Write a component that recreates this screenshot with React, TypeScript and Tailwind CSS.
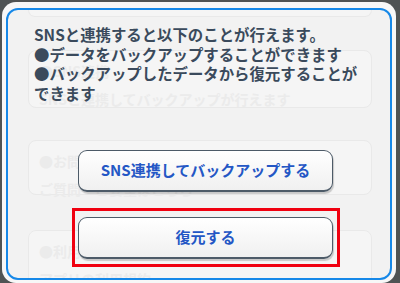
import React from "react";

const jp = { fontFamily: '"Noto Sans CJK JP", "Noto Sans", sans-serif' };

function GhostCard({ h, title, body, mt }: { h: number; title: string; body: string; mt: string }) {
  return (
    <div
      aria-hidden="true"
      className={`${mt} ml-[20px] w-[344px] rounded-[8px] border border-[#e9e9e9] bg-[#f5f5f5] px-[10px] pt-[6px] text-[14px] font-bold leading-[28px] text-[#ebebeb]`}
      style={{ height: h }}
    >
      <div>{title}</div>
      <div>{body}</div>
    </div>
  );
}

export default function App() {
  return (
    <div className="w-[400px] h-[283px] overflow-hidden bg-[#4f5354] pl-[2px] pt-[2px]" style={jp}>
      <div className="w-[394px] h-[281px] rounded-[14px] bg-[#f7f7f7] pl-[4px] pr-[4px] pt-[6px] pb-[3px]">
        <div className="grid h-[272px] w-[386px] overflow-hidden rounded-[12px] border-2 border-[#1688e8] bg-[#f2f2f2]">
          {/* faded content behind */}
          <div className="[grid-area:1/1] flex flex-col">
            <div className="ml-[20px] h-[7px] w-[344px] rounded-b-[8px] border border-t-0 border-[#e9e9e9] bg-[#f5f5f5]" />
            <GhostCard mt="mt-[33px]" h={58} title="●SNS連携" body="SNSと連携してバックアップが行えます" />
            <GhostCard mt="mt-[32px]" h={55} title="●お問い合わせ" body="ご質問・ご要望はこちら" />
            <GhostCard mt="mt-[35px]" h={60} title="●利用規約" body="アプリの利用規約" />
          </div>
          {/* dialog content */}
          <div className="[grid-area:1/1] flex flex-col pt-[15px]">
            <p className="ml-[26px] text-[15.4px] font-bold leading-[19.5px] text-[#3a4a5c]">
              SNSと連携すると以下のことが行えます。
              <br />●データをバックアップすることができます
              <br />●バックアップしたデータから復元することが
              <br />できます
            </p>
            <button className="ml-[70px] mt-[47px] h-[42px] w-[255px] rounded-[9px] border-[1.5px] border-b-[2.5px] border-[#4d5b68] bg-gradient-to-b from-[#ffffff] to-[#f0f0f0] text-[15px] font-bold text-[#2457c5] shadow-[1px_2px_1px_rgba(0,0,0,0.18)]">
              SNS連携してバックアップする
            </button>
            <div className="ml-[64px] mt-[16px] h-[59px] w-[268px] border-[3px] border-[#f00010] pl-[3px] pt-[6px]">
              <button className="h-[42px] w-[255px] rounded-[9px] border-[1.5px] border-b-[2.5px] border-[#4d5b68] bg-gradient-to-b from-[#ffffff] to-[#f0f0f0] text-[15px] font-bold text-[#2457c5] shadow-[1px_2px_1px_rgba(0,0,0,0.18)]">
                復元する
              </button>
            </div>
          </div>
        </div>
      </div>
    </div>
  );
}
